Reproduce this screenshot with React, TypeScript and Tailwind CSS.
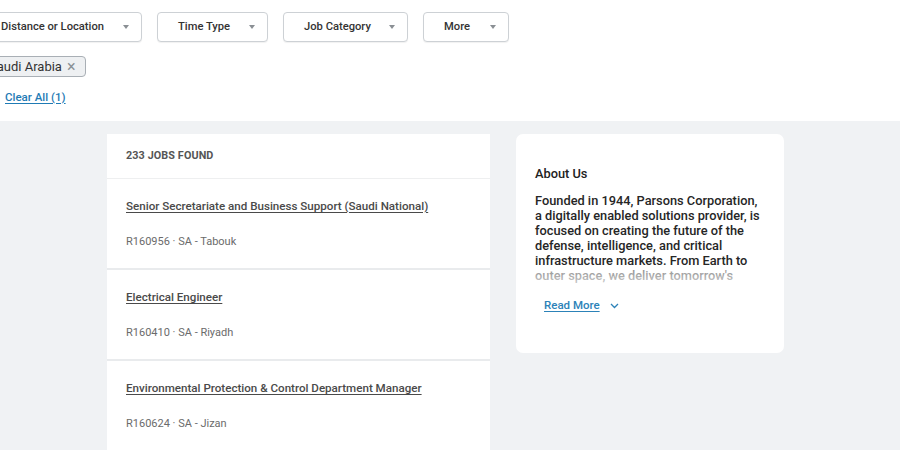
const jobs = [
  { title: "Senior Secretariate and Business Support (Saudi National)", meta: "R160956 · SA - Tabouk" },
  { title: "Electrical Engineer", meta: "R160410 · SA - Riyadh" },
  { title: "Environmental Protection & Control Department Manager", meta: "R160624 · SA - Jizan" },
];

const filters = [
  { label: "Distance or Location", w: "w-[162px]" },
  { label: "Time Type", w: "w-[111px]" },
  { label: "Job Category", w: "w-[125px]" },
  { label: "More", w: "w-[86px]" },
];

const about = [
  "Founded in 1944, Parsons Corporation,",
  "a digitally enabled solutions provider, is",
  "focused on creating the future of the",
  "defense, intelligence, and critical",
  "infrastructure markets. From Earth to",
  "outer space, we deliver tomorrow's",
];

function Caret() {
  return (
    <svg width="8" height="6" viewBox="0 0 8 6" className="shrink-0">
      <path d="M1 1h6L4 5z" fill="#8a8f94" />
    </svg>
  );
}

export default function App() {
  return (
    <div className="w-[900px] h-[450px] overflow-hidden bg-[#f0f2f4] font-['Roboto',sans-serif]">
      {/* Filters */}
      <div className="bg-white h-[121px] pt-[12px]">
        <div className="flex gap-[15px] -ml-[20px]">
          {filters.map((f) => (
            <div
              key={f.label}
              className={`${f.w} h-[30px] flex items-center justify-between pl-[20px] pr-[11px] bg-white border border-[#cdd1d5] rounded-[4px] shadow-[0_1px_1px_rgba(0,0,0,0.06)]`}
            >
              <span className="whitespace-nowrap text-[11.2px] font-medium text-[#333]">{f.label}</span>
              <Caret />
            </div>
          ))}
        </div>

        <div className="mt-[14px] -ml-[15px] inline-flex items-center h-[21px] pl-[3px] pr-[10px] bg-[#eef0f2] border border-[#a9afb5] rounded-[4px] text-[13px] text-[#333] whitespace-nowrap">
          Saudi Arabia
          <span className="ml-[5px] text-[#8a9096] text-[16px] leading-none">×</span>
        </div>

        <div className="mt-[6px] ml-[5px]">
          <a className="text-[11.5px] font-medium text-[#1f7bb5] underline underline-offset-2">Clear All (1)</a>
        </div>
      </div>

      {/* Content */}
      <div className="flex gap-[26px] pl-[107px] pt-[13px]">
        <div className="w-[383px] bg-white">
          <div className="h-[45px] flex items-center px-[19px] border-b border-[#eeeff0] text-[10.8px] font-bold text-[#555] tracking-[0.1px]">
            233 JOBS FOUND
          </div>
          {jobs.map((j) => (
            <div key={j.meta} className="h-[91px] px-[19px] pt-[20px] border-b-2 border-[#e9ebed]">
              <div className="whitespace-nowrap text-[11.6px] font-medium text-[#4a4a4a] underline underline-offset-2 leading-[14px]">
                {j.title}
              </div>
              <div className="mt-[22px] text-[11px] text-[#6b6b6b] leading-[14px]">{j.meta}</div>
            </div>
          ))}
        </div>

        <div className="w-[268px] h-[219px] bg-white rounded-[7px] px-[19px] pt-[32px]">
          <div className="text-[12.8px] font-medium text-[#222] leading-[15px]">About Us</div>
          <div className="relative mt-[12px] text-[12.8px] font-medium text-[#262626] leading-[15px]">
            {about.map((l) => (
              <div key={l} className="whitespace-nowrap">{l}</div>
            ))}
            <div className="absolute left-0 right-0 bottom-0 h-[16px] bg-gradient-to-b from-white/45 to-white/75" />
          </div>
          <div className="mt-[14px] ml-[9px] flex items-center gap-[10px]">
            <a className="text-[11.5px] font-medium text-[#2c82b8] underline underline-offset-2">Read More</a>
            <svg width="9" height="6" viewBox="0 0 9 6">
              <path d="M1 1l3.5 3.5L8 1" fill="none" stroke="#2c82b8" strokeWidth="1.3" />
            </svg>
          </div>
        </div>
      </div>
    </div>
  );
}
